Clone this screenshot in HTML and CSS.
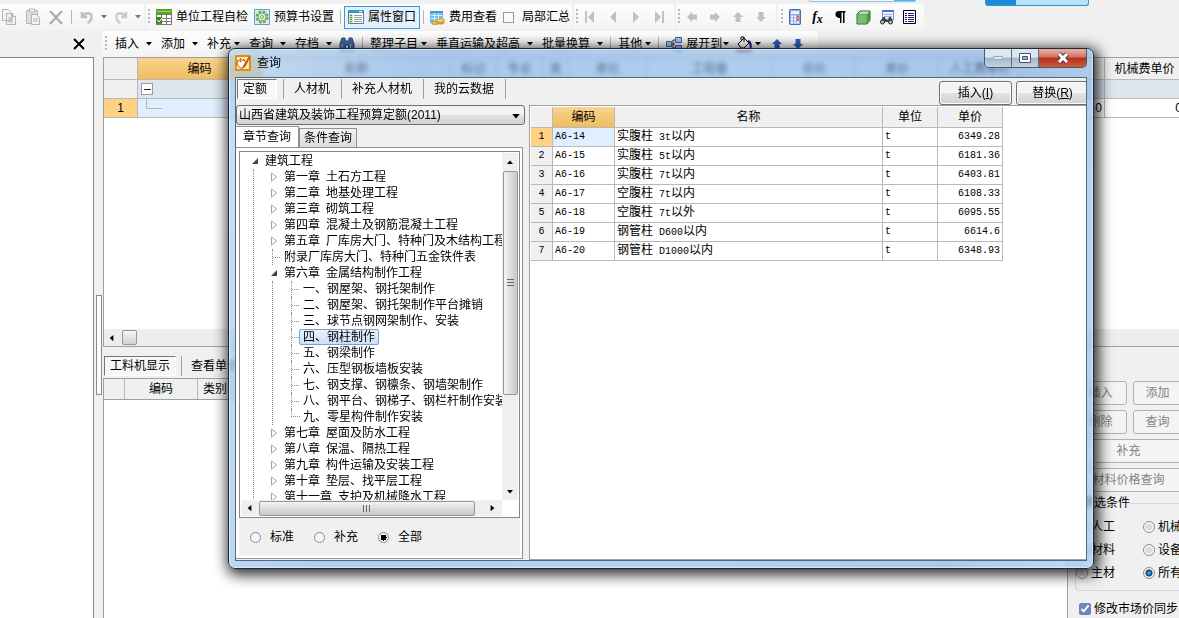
FILE: index.html
```html
<!DOCTYPE html>
<html lang="zh-CN">
<head>
<meta charset="utf-8">
<title>查询</title>
<link rel="stylesheet" href="styles.css">
</head>
<body>
<svg class="defs" aria-hidden="true">
  <symbol id="caret" viewBox="0 0 6 4"><path d="M0 0h6L3 3.500z"/></symbol>
  <symbol id="closed" viewBox="0 0 8 10"><path d="M1.500 1v8L6.500 5z" fill="#fff" stroke="#a0a0a0"/></symbol>
  <symbol id="open" viewBox="0 0 8 10"><path d="M7 2v6H1z" fill="#444"/></symbol>
  <symbol id="up" viewBox="0 0 14 14"><path d="M7 2l5 5H9.500v5h-5V7H2z"/></symbol>
  <symbol id="tri" viewBox="0 0 8 12"><path d="M7 1v10L1 6z"/></symbol>
</svg>

<div class="app">
  <div class="toolbars">
    <div class="bar">
      <div class="strip edit">
        <button class="ico" aria-label="复制"><svg width="16" height="18" viewBox="0 0 16 18" fill="#f4f4f4" stroke="#b4b4b4"><path d="M1.500 1.500h6l3 3v8h-9zM5.500 5.500h6l3 3v8h-9z"/><path d="M7 10h5M7 12h5M7 14h5M11.500 5.500v3h3"/></svg></button>
        <button class="ico" aria-label="粘贴"><svg width="16" height="18" viewBox="0 0 16 18" fill="#ddd" stroke="#b4b4b4"><path d="M1.500 2.500h11v13h-11z"/><path fill="#f4f4f4" d="M4.500 1h5v3h-5zM6.500 6.500h5l3 3v7h-8z"/><path d="M8 11h5M8 13h5"/></svg></button>
        <button class="ico" aria-label="删除"><svg width="14" height="16" viewBox="0 0 14 16" fill="none" stroke="#aaa" stroke-width="2"><path d="M1 2l12 13M13 2L1 15"/></svg></button>
        <i class="sep"></i>
        <button class="ico" aria-label="撤销"><svg width="14" height="16" viewBox="0 0 14 16" fill="none" stroke="#c0c0c0" stroke-width="2.500"><path d="M2 3v5h5M2.500 7.500C5 3 12 3 11.500 8c0 3-2 5-4 6"/></svg></button>
        <svg class="caret"><use href="#caret"/></svg>
        <button class="ico" aria-label="恢复"><svg width="14" height="16" viewBox="0 0 14 16" fill="none" stroke="#ccc" stroke-width="2.500"><path d="M12 3v5H7M11.500 7.500C9 3 2 3 2.500 8c0 3 2 5 4 6"/></svg></button>
        <svg class="caret"><use href="#caret"/></svg>
      </div>
      <div class="strip main">
        <i class="grip"></i>
        <button class="cmd"><svg width="16" height="16"><path d="M0 0h16v16H0z" fill="#777"/><path d="M0 0h16v5H0z" fill="#5aa51e"/><path d="M1 2h14v1H1z" fill="#a6dc60"/><path d="M1 6h4v3H1zM6 6h4v3H6zM11 6h4v3h-4zM6 10h4v2H6zM11 10h4v2h-4zM6 13h4v2H6zM11 13h4v2h-4z" fill="#fff"/><path d="M0 8h6v6H0z" fill="#3b851d"/><path d="M1 11l2 2 3-4" fill="none" stroke="#fff"/></svg>单位工程自检</button>
        <button class="cmd"><svg width="16" height="16"><path d="M.5.5h15v15H.5z" fill="#dcebf5" stroke="#6c9bc4"/><circle cx="8" cy="8" r="5.500" fill="none" stroke="#63a95c" stroke-width="2" stroke-dasharray="3 1.300"/><circle cx="8" cy="8" r="4" fill="#e5f4df" stroke="#63a95c"/><circle cx="8" cy="8" r="1.500" fill="#fff" stroke="#63a95c"/></svg>预算书设置</button>
        <i class="sep"></i>
        <button class="cmd active"><svg width="16" height="16"><path d="M.5 1.500h15v13H.5z" fill="#fff" stroke="#6b7680"/><path d="M1 1h14v3H1z" fill="#2b9cc8"/><path d="M11 2h3v1h-3z" fill="#fff"/><path d="M1 5h4v9H1z" fill="#cfe8cb"/><path d="M2 6.500h2M2 8.500h2M2 10.500h2M2 12.500h2" stroke="#3a9a3a"/><path d="M6 6.500h8M6 8.500h8M6 10.500h8M6 12.500h8" stroke="#999"/></svg>属性窗口</button>
        <i class="sep"></i>
        <button class="cmd"><svg width="15" height="15"><path d="M0 1h13v12H0z" fill="#6fc0e6"/><path d="M0 1h13v2H0z" fill="#3e9bd0"/><path d="M1 5.500h11M1 8.500h11M4.500 3v9M8.500 3v9" stroke="#d8f0fb"/><ellipse cx="10.500" cy="12.500" rx="4" ry="2" fill="#d89c2d"/><ellipse cx="10.500" cy="10.500" rx="4" ry="2" fill="#f3c765" stroke="#b97f1c" stroke-width=".6"/><ellipse cx="5" cy="13" rx="3.500" ry="1.600" fill="#e9b44c" stroke="#b97f1c" stroke-width=".6"/></svg>费用查看</button>
        <label class="sum"><input type="checkbox" class="flat-check">局部汇总</label>
      </div>
      <div class="strip nav dis">
        <i class="grip"></i>
        <button class="ico" aria-label="第一条"><svg width="12" height="14" viewBox="0 0 12 14"><path d="M1 1h2v12H1zM10 1v12L4 7z"/></svg></button>
        <button class="ico" aria-label="上一条"><svg width="12" height="14" viewBox="0 0 12 14"><path d="M9 1v12L3 7z"/></svg></button>
        <button class="ico" aria-label="下一条"><svg width="12" height="14" viewBox="0 0 12 14"><path d="M3 1v12l6-6z"/></svg></button>
        <button class="ico" aria-label="最后一条"><svg width="12" height="14" viewBox="0 0 12 14"><path d="M9 1h2v12H9zM2 1v12l6-6z"/></svg></button>
      </div>
      <div class="strip nav dis">
        <i class="grip"></i>
        <button class="ico" aria-label="左移"><svg width="14" height="14" class="r270"><use href="#up"/></svg></button>
        <button class="ico" aria-label="右移"><svg width="14" height="14" class="r90"><use href="#up"/></svg></button>
        <button class="ico" aria-label="上移"><svg width="14" height="14"><use href="#up"/></svg></button>
        <button class="ico" aria-label="下移"><svg width="14" height="14" class="r180"><use href="#up"/></svg></button>
      </div>
      <div class="strip tools">
        <i class="grip"></i>
        <button class="ico" aria-label="计算器"><svg width="14" height="16"><rect x="1.500" y=".5" width="11" height="15" rx="1" fill="#8eace0" stroke="#4a68a5"/><path d="M3 2h8v3H3z" fill="#e8f2ff"/><path d="M3 7.500h8M3 10.500h8M3 13.500h8" stroke="#fff" stroke-width="2" stroke-dasharray="2 1"/><path d="M9 7.500h2M9 10.500h2" stroke="#d84c4c" stroke-width="2"/></svg></button>
        <button class="ico fx" aria-label="函数"><i>f</i><i>x</i></button>
        <button class="ico" aria-label="段落"><svg width="11" height="13"><path d="M10.500 0v1.500H9.500V12H8V1.500H6.500V12H5V7C-1 7-1 0 4 0z"/></svg></button>
        <button class="ico" aria-label="立方体"><svg width="15" height="15"><path d="M1 4l3-3h10v9l-3 4H1z" fill="#4f9b4c" stroke="#2c6b2e"/><path d="M1.500 4.500h9v9h-9z" fill="#78be72"/><path d="M2 4l2.500-2.500h9L11 4z" fill="#b5dfae"/></svg></button>
        <button class="ico" aria-label="查找"><svg width="16" height="16"><path d="M3.500 1.500h11v9h-11z" fill="#eef3ff" stroke="#7891cf"/><path d="M3 1h12v2H3z" fill="#4d70c8"/><path d="M5 5.500h8M5 7.500h8" stroke="#9ab0dc"/><path d="M4 8h2l1 3h2l1-3h2l2 5H1z" fill="#444"/><circle cx="3.500" cy="13" r="2" fill="#9cb" stroke="#222"/><circle cx="11.500" cy="13" r="2" fill="#9cb" stroke="#222"/></svg></button>
        <button class="ico" aria-label="列表"><svg width="13" height="14"><path d="M.5.5h12v13H.5z" fill="#fff" stroke="#000"/><path d="M2 3.500h2M2 5.500h2M2 7.500h2M2 9.500h2M2 11.500h2M5 3.500h6M5 5.500h6M5 7.500h6M5 9.500h6M5 11.500h6" stroke="#1c1c86"/></svg></button>
      </div>
    </div>
    <div class="bar second">
      <button class="close-pane" aria-label="关闭"><svg width="12" height="12" stroke="#000" stroke-width="2"><path d="M1 1l10 10M11 1L1 11"/></svg></button>
      <div class="strip menu">
        <i class="grip"></i>
        <button>插入<svg class="caret"><use href="#caret"/></svg></button>
        <button>添加<svg class="caret"><use href="#caret"/></svg></button>
        <button class="tight">补充<svg class="caret"><use href="#caret"/></svg></button>
        <button>查询<svg class="caret"><use href="#caret"/></svg></button>
        <button class="last">存档<svg class="caret"><use href="#caret"/></svg></button>
        <button class="pic" aria-label="查找"><svg width="16" height="16"><path d="M3 2h3v3h4V2h3l2 6v6H9.500V9h-3v5H1V8z" fill="#466ca8" stroke="#28477c"/><path d="M3 8v5M11.500 8v5" stroke="#b8cdf0"/></svg></button>
        <i class="sep"></i>
        <button class="tight">整理子目<svg class="caret"><use href="#caret"/></svg></button>
        <button>垂直运输及超高<svg class="caret"><use href="#caret"/></svg></button>
        <button class="last">批量换算<svg class="caret"><use href="#caret"/></svg></button>
        <i class="sep"></i>
        <button class="tight last">其他<svg class="caret"><use href="#caret"/></svg></button>
        <i class="sep"></i>
        <button class="tight expand"><svg width="16" height="14"><path d="M5 7h4M7 3v8M7 3h3M7 11h3" stroke="#333"/><path d="M.5 4.500h5v5h-5zM9.500.5h6v5h-6zM9.500 8.500h6v5h-6z" fill="#a9c4ee" stroke="#3c62ab"/></svg>展开到<svg class="caret"><use href="#caret"/></svg></button>
        <button class="tight bucket" aria-label="填充颜色"><svg width="16" height="16"><path d="M2 8l6-6 5 5-5 5H5z" fill="#fff" stroke="#000"/><path d="M5 4V1h3v5" fill="none" stroke="#000"/><path d="M12 5c3 1 3 4 2.500 7" stroke="#16168a" stroke-width="2" fill="none"/><path d="M0 13h16v3H0z" fill="#d02020"/></svg><svg class="caret"><use href="#caret"/></svg></button>
        <button class="pic blue" aria-label="上移"><svg width="14" height="14"><use href="#up"/></svg></button>
        <button class="pic blue" aria-label="下移"><svg width="14" height="14" class="r180"><use href="#up"/></svg></button>
      </div>
    </div>
  </div>

  <div class="work">
    <aside class="outline"></aside>
    <div class="splitter"><i></i></div>
    <main class="main-area">
      <section class="upper">
        <table class="back-grid">
          <colgroup><col class="b-no"><col class="b-code"><col class="b-name"><col class="b-s"><col class="b-s"><col class="b-xs"><col class="b-m"><col class="b-xl"><col class="b-l"><col class="b-l"><col class="b-l"><col class="b-l"><col class="b-l"></colgroup>
          <thead><tr><th></th><th class="hot">编码</th><th>名称</th><th>标记</th><th>专业</th><th>类</th><th>单位</th><th>工程量</th><th>合价</th><th>单价</th><th>人工费单价</th><th></th><th>机械费单价</th></tr></thead>
          <tbody>
            <tr class="group"><th></th><td><span class="minus"></span></td><td></td><td></td><td></td><td></td><td></td><td></td><td></td><td></td><td></td><td></td><td></td></tr>
            <tr><th class="cur">1</th><td class="sel"><span class="elbow"></span></td><td></td><td></td><td></td><td></td><td></td><td></td><td></td><td></td><td></td><td class="num">0</td><td class="num">0</td></tr>
          </tbody>
        </table>
        <div class="back-scroll"><svg width="5" height="8" viewBox="0 0 8 12"><use href="#tri"/></svg><i></i></div>
      </section>
      <section class="lower">
        <div class="detail">
          <div class="detail-tabs"><button class="pressed">工料机显示</button><button>查看单价构成</button></div>
          <div class="detail-head"><span></span><span>编码</span><span>类别</span></div>
          <div class="detail-body"></div>
        </div>
        <aside class="side">
          <div class="pair"><button disabled>插入</button><button disabled>添加</button></div>
          <div class="pair"><button disabled>删除</button><button disabled>查询</button></div>
          <button disabled>补充</button>
          <button disabled>材料价格查询</button>
          <fieldset>
            <legend>筛选条件</legend>
            <label><input type="radio" name="f">人工</label><label><input type="radio" name="f">机械</label>
            <label><input type="radio" name="f">材料</label><label><input type="radio" name="f">设备</label>
            <label><input type="radio" name="f">主材</label><label><input type="radio" name="f" checked>所有</label>
          </fieldset>
          <label class="sync"><input type="checkbox" checked>修改市场价同步</label>
        </aside>
      </section>
    </main>
  </div>

  <div class="float one"></div>
  <div class="float two"></div>

  <div class="dialog" role="dialog" aria-labelledby="dlg-title">
    <header class="title">
      <svg width="16" height="16"><rect width="16" height="16" rx="1" fill="#e58a12"/><path d="M2 2h12v12H2z" fill="#ffe9b8"/><path d="M3 5l3 2-1-4 3 3 1-2 2 5-3 4H5L2 9z" fill="#fff" stroke="#c4660a"/><path d="M14 1L8 11l-1 3 3-2 5-9z" fill="#c5560a"/></svg>
      <h1 id="dlg-title">查询</h1>
      <div class="winbtns">
        <button aria-label="最小化"><svg width="12" height="6"><path d="M1.500 1.500h9v3h-9z" fill="#dfe7ee" stroke="#9aa9b8"/></svg></button>
        <button aria-label="最大化"><svg width="12" height="10"><path d="M.5.5h11v9H.5z" fill="#fff" stroke="#45566b"/><path d="M3.500 3.500h5v3h-5z" fill="#9db4cc" stroke="#45566b"/></svg></button>
        <button class="x" aria-label="关闭"><svg width="14" height="12" fill="none"><path d="M3 2l8 8M11 2l-8 8" stroke="#5b3540" stroke-width="5"/><path d="M3 2l8 8M11 2l-8 8" stroke="#fff" stroke-width="3"/></svg></button>
      </div>
    </header>
    <div class="client">
      <div class="topline">
        <nav><button class="pressed">定额</button><button>人材机</button><button>补充人材机</button><button>我的云数据</button></nav>
        <div class="actions"><button>插入(<u>I</u>)</button><button>替换(<u>R</u>)</button></div>
      </div>
      <div class="panes">
        <section class="left">
          <div class="combo"><select aria-label="定额库"><option>山西省建筑及装饰工程预算定额(2011)</option></select><svg class="caret"><use href="#caret"/></svg></div>
          <div class="tabs"><button class="on">章节查询</button><button>条件查询</button></div>
          <div class="page">
            <div class="tree">
              <div class="tree-view">
                <ul class="root">
                  <li><div class="row"><svg><use href="#open"/></svg>建筑工程</div>
                    <ul>
                      <li><div class="row"><svg><use href="#closed"/></svg><span>第一章</span><span>土石方工程</span></div></li>
                      <li><div class="row"><svg><use href="#closed"/></svg><span>第二章</span><span>地基处理工程</span></div></li>
                      <li><div class="row"><svg><use href="#closed"/></svg><span>第三章</span><span>砌筑工程</span></div></li>
                      <li><div class="row"><svg><use href="#closed"/></svg><span>第四章</span><span>混凝土及钢筋混凝土工程</span></div></li>
                      <li><div class="row"><svg><use href="#closed"/></svg><span>第五章</span><span>厂库房大门、特种门及木结构工程</span></div></li>
                      <li><div class="row"><i class="twig"></i><span>附录厂库房大门、特种门五金铁件表</span></div></li>
                      <li><div class="row"><svg><use href="#open"/></svg><span>第六章</span><span>金属结构制作工程</span></div>
                        <ul>
                          <li><div class="row"><i class="twig"></i><span>一、钢屋架、钢托架制作</span></div></li>
                          <li><div class="row"><i class="twig"></i><span>二、钢屋架、钢托架制作平台摊销</span></div></li>
                          <li><div class="row"><i class="twig"></i><span>三、球节点钢网架制作、安装</span></div></li>
                          <li><div class="row"><i class="twig"></i><span class="picked">四、钢柱制作</span></div></li>
                          <li><div class="row"><i class="twig"></i><span>五、钢梁制作</span></div></li>
                          <li><div class="row"><i class="twig"></i><span>六、压型钢板墙板安装</span></div></li>
                          <li><div class="row"><i class="twig"></i><span>七、钢支撑、钢檩条、钢墙架制作</span></div></li>
                          <li><div class="row"><i class="twig"></i><span>八、钢平台、钢梯子、钢栏杆制作安装</span></div></li>
                          <li><div class="row"><i class="twig end"></i><span>九、零星构件制作安装</span></div></li>
                        </ul>
                      </li>
                      <li><div class="row"><svg><use href="#closed"/></svg><span>第七章</span><span>屋面及防水工程</span></div></li>
                      <li><div class="row"><svg><use href="#closed"/></svg><span>第八章</span><span>保温、隔热工程</span></div></li>
                      <li><div class="row"><svg><use href="#closed"/></svg><span>第九章</span><span>构件运输及安装工程</span></div></li>
                      <li><div class="row"><svg><use href="#closed"/></svg><span>第十章</span><span>垫层、找平层工程</span></div></li>
                      <li><div class="row"><svg><use href="#closed"/></svg><span>第十一章</span><span>支护及机械降水工程</span></div></li>
                    </ul>
                  </li>
                </ul>
              </div>
              <div class="vbar"><svg class="r180" width="6" height="4"><use href="#caret"/></svg><div class="track"><i class="thumb"></i></div><svg width="6" height="4"><use href="#caret"/></svg></div>
              <div class="hbar"><svg width="5" height="8"><use href="#tri"/></svg><div class="track"><i class="thumb"></i></div><svg class="r180" width="5" height="8"><use href="#tri"/></svg></div>
            </div>
            <div class="scope">
              <label><input type="radio" name="scope">标准</label>
              <label><input type="radio" name="scope">补充</label>
              <label><input type="radio" name="scope" checked>全部</label>
            </div>
          </div>
        </section>
        <section class="right">
          <table class="items">
            <colgroup><col class="c-no"><col class="c-code"><col class="c-name"><col class="c-unit"><col class="c-price"></colgroup>
            <thead><tr><th></th><th class="hot">编码</th><th>名称</th><th>单位</th><th>单价</th></tr></thead>
            <tbody>
              <tr><th class="cur">1</th><td class="mono sel">A6-14</td><td>实腹柱<span class="spec">3t</span>以内</td><td class="mono">t</td><td class="mono num">6349.28</td></tr>
              <tr><th>2</th><td class="mono">A6-15</td><td>实腹柱<span class="spec">5t</span>以内</td><td class="mono">t</td><td class="mono num">6181.36</td></tr>
              <tr><th>3</th><td class="mono">A6-16</td><td>实腹柱<span class="spec">7t</span>以内</td><td class="mono">t</td><td class="mono num">6403.81</td></tr>
              <tr><th>4</th><td class="mono">A6-17</td><td>空腹柱<span class="spec">7t</span>以内</td><td class="mono">t</td><td class="mono num">6108.33</td></tr>
              <tr><th>5</th><td class="mono">A6-18</td><td>空腹柱<span class="spec">7t</span>以外</td><td class="mono">t</td><td class="mono num">6095.55</td></tr>
              <tr><th>6</th><td class="mono">A6-19</td><td>钢管柱<span class="spec">D600</span>以内</td><td class="mono">t</td><td class="mono num">6614.6</td></tr>
              <tr><th>7</th><td class="mono">A6-20</td><td>钢管柱<span class="spec">D1000</span>以内</td><td class="mono">t</td><td class="mono num">6348.93</td></tr>
            </tbody>
          </table>
        </section>
      </div>
    </div>
  </div>
</div>
</body>
</html>
```

FILE: styles.css
```css
* { box-sizing: border-box; }
body {
  margin: 0;
  background: #f0f0f0;
  color: #000;
  font: 12px/16px "Liberation Sans", "Noto Sans CJK SC", sans-serif;
}
button, input, select { font: inherit; color: inherit; margin: 0; }
button { padding: 0; border: 0; background: none; white-space: nowrap; }
ul { list-style: none; margin: 0; padding: 0; }
svg { display: block; flex: none; }
.defs { position: absolute; width: 0; height: 0; }
.caret { width: 6px; height: 4px; }
.r90 { transform: rotate(90deg); }
.r180 { transform: rotate(180deg); }
.r270 { transform: rotate(270deg); }

.app {
  position: relative;
  display: flex;
  flex-direction: column;
  height: 100vh;
  min-height: 600px;
  overflow: hidden;
}

/* toolbars */
.toolbars { padding-top: 4px; }
.bar { display: flex; gap: 2px; height: 27px; }
.strip {
  display: flex;
  flex: none;
  align-items: center;
  height: 26px;
  border-radius: 3px;
  background: linear-gradient(#fdfdfd, #f3f3f3);
}
.grip {
  flex: none;
  width: 2px;
  height: 16px;
  background: repeating-linear-gradient(#b8b8b8 0 2px, transparent 2px 4px);
}
.sep { flex: none; width: 1px; height: 14px; background: #b5b5b5; }
.ico { display: flex; align-items: center; justify-content: center; }
.edit { width: 144px; padding-left: 1px; gap: 8px; }
.edit .caret { fill: #777; margin: 0 -1px; }
.main { width: 426px; padding-left: 2px; gap: 6px; }
.cmd { display: flex; align-items: center; gap: 4px; height: 23px; }
.cmd.active {
  padding: 0 3px;
  margin: 0 -3px;
  border: 1px solid #3c96e8;
  background: #e4f0fb;
}
.sum { display: flex; align-items: center; gap: 8px; white-space: nowrap; }
.flat-check {
  appearance: none;
  width: 11px;
  height: 11px;
  border: 1px solid #9a9a9a;
  background: #fafafa;
}
.nav { width: 100px; padding-left: 2px; }
.nav .ico { width: 23px; }
.dis { fill: #c0c0c0; }
.tools { width: 146px; padding-left: 3px; }
.tools .ico { width: 23px; }
.fx { font: italic bold 14px/16px "Liberation Serif", serif; }
.fx i + i { font-size: 12px; padding-top: 3px; }

.second { gap: 0; }
.close-pane { display: flex; justify-content: center; align-items: center; width: 14px; margin: 0 16px 2px 72px; }
.menu { padding: 0 6px 0 3px; }
.menu button { display: flex; align-items: center; margin-right: 9px; }
.menu .grip { margin-right: 8px; }
.menu .caret { margin-left: 7px; }
.menu .tight .caret { margin-left: 3px; }
.menu .pic, .menu .last { margin-right: 7px; }
.menu .sep { margin-right: 7px; }
.menu .expand { gap: 4px; margin-right: 7px; }
.menu .expand .caret { margin-left: -3px; }
.blue { fill: #2c5fc4; }

/* workspace behind the dialog */
.work { display: flex; flex: 1; min-height: 0; margin-top: -1px; }
.outline { width: 94px; background: #fff; border: 1px solid #828790; border-left: 0; border-bottom: 0; }
.splitter { display: flex; justify-content: center; width: 9px; padding-top: 238px; }
.splitter i { width: 6px; height: 100px; border: 1px solid #8c8c8c; background: #fbfbfb; }
.main-area { display: flex; flex: 1; flex-direction: column; min-width: 0; }
.upper {
  display: flex;
  flex-direction: column;
  justify-content: space-between;
  height: 290px;
  overflow: hidden;
  border: 1px solid #a0a0a0;
  border-right: 0;
  background: #fff;
}
table { border-collapse: separate; border-spacing: 0; table-layout: fixed; }
th, td { padding: 0 2px; border: 0 solid #b9b9b9; border-width: 0 1px 1px 0; font-weight: normal; text-align: left; white-space: nowrap; overflow: hidden; }
th { background: #f0f0f0; text-align: center; }
th.hot { background: linear-gradient(#fbd490, #eebb60); }
th.cur { background: #ffd283; }
.sel { background: #dfefff; }
.num { text-align: right; }
.back-grid { width: 1081px; }
.back-grid tr { height: 19px; }
.back-grid thead tr { height: 22px; }
.back-grid .group td { background: #dde5ef; }
.b-no { width: 34px; }
.b-code { width: 124px; }
.b-name { width: 189px; }
.b-s { width: 46px; }
.b-xs { width: 26px; }
.b-m { width: 78px; }
.b-xl { width: 126px; }
.b-l { width: 83px; }
.b-l:last-child { width: 80px; }
.minus { display: block; width: 12px; height: 12px; margin-left: 1px; border: 1px solid #999; background: linear-gradient(#222, #222) center / 7px 1px no-repeat #fff; }
.elbow { display: block; width: 16px; height: 10px; margin: -9px 0 0 6px; border: 0 solid #b4b4b4; border-width: 0 0 1px 1px; }
.back-scroll { display: flex; align-items: center; gap: 8px; height: 17px; padding-left: 5px; background: #ededed; }
.back-scroll i { width: 15px; height: 15px; border: 1px solid #979797; border-radius: 2px; background: linear-gradient(#f5f5f5, #d2d2d2); }

.lower { display: flex; flex: 1; min-height: 0; }
.detail { display: flex; flex: 1; flex-direction: column; min-width: 0; }
.detail-tabs { display: flex; align-items: center; gap: 5px; height: 31px; padding: 6px 1px 0; }
.pressed {
  border: 1px solid;
  border-color: #777 #fff #fff #777;
  background: repeating-conic-gradient(#fff 0 25%, #efefef 0 50%) 0 0 / 2px 2px;
}
.detail-tabs button { height: 20px; padding: 0 5px; }
.detail-tabs button + button { padding: 0 9px; border-left: 1px solid #a0a0a0; }
.detail-head { display: flex; height: 22px; border: 1px solid #a0a0a0; border-right: 0; line-height: 20px; text-align: center; }
.detail-head span { flex: none; width: 73px; border-right: 1px solid #b9b9b9; }
.detail-head span:first-child { width: 21px; }
.detail-head span:last-child { width: 35px; }
.detail-body { flex: 1; border-left: 1px solid #a0a0a0; background: #fff; }

.side { display: flex; flex: none; flex-direction: column; align-items: flex-start; gap: 5px; width: 112px; padding: 34px 0 0 6px; border-left: 1px solid #a0a0a0; overflow: hidden; }
.side button { flex: none; width: 109px; height: 24px; border: 1px solid #adb2b5; border-radius: 3px; background: #f4f4f4; color: #838383; }
.pair { display: flex; flex: none; gap: 6px; }
.pair button { width: 53px; }
.pair button + button { width: 49px; }
.side fieldset { display: grid; flex: none; grid-template-columns: 67px 60px; row-gap: 7px; width: 130px; margin: -2px 0 0 1px; padding: 8px 0 9px; border: 1px solid #d0d8e0; border-radius: 3px; }
.side legend { padding: 0; margin-left: 6px; }
.side label { display: flex; align-items: center; gap: 3px; white-space: nowrap; }
.side input[type="radio"] { appearance: none; width: 12px; height: 12px; border: 1px solid #8e8f8f; border-radius: 50%; background: radial-gradient(#dcdcdc 0 3px, #f6f6f6 4px); }
.side input[type="radio"]:checked { background: radial-gradient(#3aa3dd 0 1px, #10385a 3px, #f6f6f6 4px); }
.side .sync { margin: 5px 0 0 5px; }
.side .sync input { width: 12px; height: 12px; accent-color: #6a85c0; }

/* corners of the floating notice windows at the top edge */
.float { position: absolute; top: 0; border: 1px solid #8fc3e8; border-top: 0; border-radius: 0 0 3px 3px; }
.one { left: 809px; width: 107px; height: 2px; background: linear-gradient(90deg, #f6f6f6 80%, #50b8f0 80%); }
.two { left: 985px; width: 104px; height: 6px; border-color: #2a96d8; background: linear-gradient(90deg, #1f8ad6 29%, #b8e2f8 29%); }

/* dialog */
.dialog {
  position: absolute;
  inset: 48px 85px 49px 228px;
  display: flex;
  flex-direction: column;
  padding: 0 6px 7px;
  border: 1px solid #1e2a36;
  border-radius: 7px;
  background: linear-gradient(100deg, #a9cdf0a0, #80b0e6a0 20%, #88b8eaa0 55%, #7aaae0a0 85%, #98c6f4a0);
  backdrop-filter: blur(2px);
  box-shadow: inset 0 0 0 1px #e4f1fdb0, 2px 3px 14px 3px #000000d0;
}
.title { display: flex; align-items: center; gap: 6px; height: 28px; flex: none; }
.title h1 { flex: 1; margin: 0; font-size: 12px; font-weight: normal; }
.winbtns { display: flex; align-self: flex-start; height: 19px; border: 1px solid #4c5b6b; border-top: 0; border-radius: 0 0 5px 5px; overflow: hidden; }
.winbtns button { display: flex; align-items: center; justify-content: center; width: 27px; border-right: 1px solid #5d6f82; background: linear-gradient(#dce7f1 45%, #a3b6c9 50%, #c3d3e3); }
.winbtns .x { width: 47px; border: 0; background: linear-gradient(#e3a89b 10%, #d1705c 45%, #b5301b 50%, #cf5a3b); }
.client { display: flex; flex: 1; flex-direction: column; min-height: 0; border: 1px solid #56687c; background: #f0f0f0; overflow: hidden; }
.topline { display: flex; justify-content: space-between; height: 27px; flex: none; }
.topline nav { display: flex; height: 22px; padding: 1px 0 1px 1px; }
.topline nav button { padding: 0 11px 0 10px; border-right: 1px solid #a0a0a0; }
.topline nav .pressed { padding: 0 9px 0 5px; margin-right: 6px; border-color: #777 #fff #fff #777; }
.topline nav .pressed + button { border-left: 1px solid #a0a0a0; }
.actions { display: flex; gap: 4px; height: 24px; margin: 3px -3px 0 0; }
.actions button { width: 73px; border: 1px solid #707070; border-radius: 3px; background: linear-gradient(#f3f3f3 50%, #e2e2e2 50%, #d2d2d2); box-shadow: inset 0 0 0 1px #fafafa; }
.panes { display: flex; flex: 1; gap: 4px; min-height: 0; }
.left { display: flex; flex-direction: column; flex: none; width: 289px; }
.combo { position: relative; height: 20px; }
.combo select { appearance: none; width: 100%; height: 20px; padding: 0 2px; border: 1px solid #707070; border-radius: 3px; background: linear-gradient(#f3f3f3 50%, #e2e2e2 50%, #d2d2d2); }
.combo .caret { position: absolute; right: 5px; top: 9px; width: 8px; height: 5px; }
.tabs { display: flex; align-items: flex-end; height: 22px; padding-top: 1px; }
.tabs button { height: 19px; padding: 0 4px; border: 1px solid #8c919b; border-bottom: 0; background: linear-gradient(#f2f2f2, #dcdcdc); }
.tabs .on { height: 21px; padding: 0 7px; border-left: 0; background: #fff; }
.page { display: flex; flex: 1; flex-direction: column; min-height: 0; margin: 0 2px 1px 0; padding: 3px 2px 2px 3px; border: 1px solid #8c919b; border-left: 0; background: #fff; }
.tree { display: grid; flex: 1; grid-template: minmax(0, 1fr) 16px / minmax(0, 1fr) 16px; min-height: 0; padding: 1px; border: 1px solid #828790; }
.tree-view { overflow: hidden; }
.root { padding-left: 10px; }
.tree ul ul { margin-left: 2px; padding-left: 16px; border-left: 1px dotted #8a8a8a; }
.row { display: flex; gap: 6px; height: 16px; white-space: nowrap; }
.row svg { width: 8px; height: 10px; margin-top: 3px; }
.twig { flex: none; width: 9px; height: 16px; margin: 0 -3px 0 2px; border-left: 1px dotted #8a8a8a; background: repeating-linear-gradient(90deg, #8a8a8a 0 1px, transparent 1px 2px) 0 8px / 100% 1px no-repeat; }
.twig.end { height: 8px; border-bottom: 1px dotted #8a8a8a; background: none; }
.picked { margin: 0 0 0 -4px; padding: 0 3px; border: 1px solid #7da2ce; border-radius: 2px; background: linear-gradient(#e8f2fd, #c9dffa); line-height: 14px; }
.vbar, .hbar { display: flex; align-items: center; justify-content: space-between; background: #efefef; }
.vbar { flex-direction: column; padding: 7px 0 6px; }
.track { display: flex; flex: 1; }
.thumb { border: 1px solid #979797; border-radius: 2px; }
.vbar .track { width: 15px; margin: 7px 0 12px; }
.vbar .thumb { width: 15px; height: 73%; background: repeating-linear-gradient(#666 0 1px, transparent 1px 3px) center / 7px 8px no-repeat, linear-gradient(90deg, #f5f5f5, #dcdcdc 50%, #c8c8c8); }
.hbar { padding: 0 7px 0 6px; }
.hbar .track { height: 15px; margin: 0 8px 0 7px; }
.hbar .thumb { width: 97%; height: 15px; background: repeating-linear-gradient(90deg, #666 0 1px, transparent 1px 3px) center / 8px 7px no-repeat, linear-gradient(#f5f5f5, #dcdcdc 50%, #c8c8c8); }
.scope { display: flex; flex: none; gap: 20px; height: 38px; padding-left: 11px; background: #f0f0f0; }
.scope label { display: flex; align-items: center; gap: 9px; }
.scope input { appearance: none; width: 11px; height: 11px; border: 1px solid #8a8a8a; border-radius: 50%; background: #f6f6f6; }
.scope input:checked { background: radial-gradient(#000 0 3px, #f6f6f6 3px); }
.right { flex: 1; min-width: 0; padding: 1px 0 0 1px; border: 1px solid #a0a0a0; border-right: 0; background: #fff; }
.items { width: 472px; }
.items tr { height: 19px; }
.items thead tr { height: 21px; }
.c-no { width: 22px; }
.c-code { width: 62px; }
.c-name { width: 268px; }
.c-unit { width: 55px; }
.c-price { width: 65px; }
.mono, .spec, .items tbody th { font-family: "Liberation Mono", monospace; font-size: 10px; }
.spec { margin-left: 6px; }
```
